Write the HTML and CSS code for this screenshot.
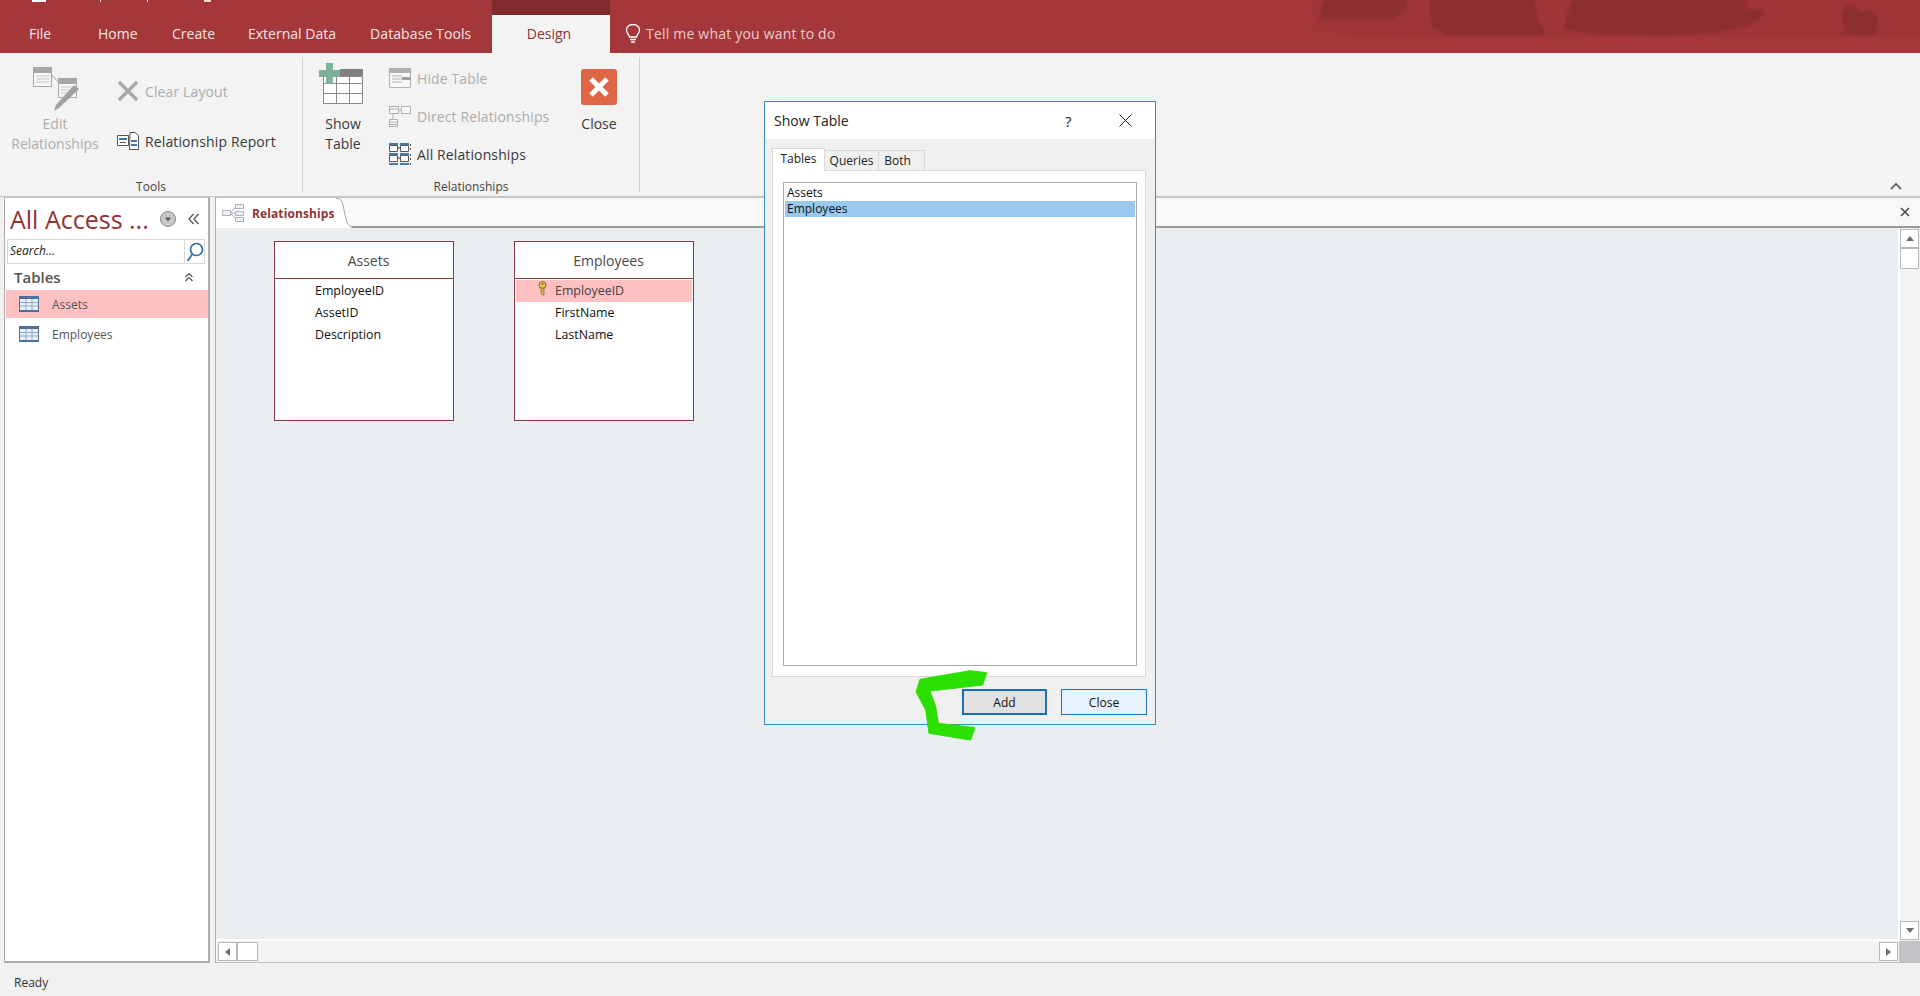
FILE: index.html
```html
<!DOCTYPE html>
<html lang="en">
<head>
  <meta charset="UTF-8" />
  <title>Relationships - Access</title>
  <link rel="stylesheet" href="styles.css">
</head>
<body>

  <header class="titlebar">
    <svg class="qat-bits" width="220" height="3" viewBox="0 0 220 3"><path d="M32 0h14v2H32z" fill="#fff"/><path d="M100 0h1v2h-1zM147 0h1v2h-1zM204 0h7v2h-7z" fill="#f0d8d8"/></svg>
    <div class="brush-zone"></div>
    <svg class="brush" width="620" height="37" viewBox="0 0 620 37">
      <path d="M19 20 23 0h84l-1 11-14 8-36 1z" fill="#8b2e30"/>
      <path d="M130 0h105l3 20 8 14-6 2H150l-18-8-2-10z" fill="#8b2e30"/>
      <path d="M263 28 272 0h178l-6 8 18 1 2 6-16 12-34 6-50 3-70-2-24-3z" fill="#8b2e30"/>
      <path d="M540 34l5-6-4-12 4-10 9-2 6 8 10-3 8 8-2 16-8 4z" fill="#8b2e30"/>
    </svg>
    <nav class="tabs">
      <span class="tab tab-file">File</span>
      <span class="tab tab-home">Home</span>
      <span class="tab tab-create">Create</span>
      <span class="tab tab-external">External Data</span>
      <span class="tab tab-dbtools">Database Tools</span>
      <span class="tab-design">Design</span>
      <span class="tell">
        <svg width="16" height="20" viewBox="0 0 16 20" fill="none" stroke="#fff" stroke-width="1.3"><path d="M4.500 13c0-2-3-3.500-3-7a6.500 5.500 0 0 1 13 0c0 3.500-3 5-3 7z"/><path d="M5 15.500h6M6 18h4"/></svg>
        Tell me what you want to do
      </span>
    </nav>
  </header>

  <section class="ribbon">
    <div class="group group-tools">
      <div class="group-body">
        <div class="big big-edit">
          <div class="big-icon">
            <svg width="46" height="44" viewBox="0 0 46 44" fill="none" stroke="#a6a6a6">
              <path d="M.5.500h18v19H.5z" fill="#f7f7f7"/><path d="M.5.500h18v5H.5z" fill="#a6a6a6"/><path d="M3 9h13M3 12h13M3 15h13" stroke="#c4c4c4"/>
              <path d="M18 7l7 8"/>
              <path d="M25.500 11.500h18v19h-18z" fill="#f7f7f7"/><path d="M25.500 11.500h18v5h-18z" fill="#a6a6a6"/><path d="M28 20h10M28 23h8M28 26h6" stroke="#c4c4c4"/>
              <path d="M41 18l5 4-20 19-5 3 2-6z" fill="#a0a0a0" stroke="none"/>
            </svg>
          </div>
          <span class="muted">Edit<br>Relationships</span>
        </div>
        <div class="smalls smalls-tools">
          <div class="small muted">
            <svg width="22" height="22" viewBox="0 0 22 22"><path d="M2 2l18 18M20 2 2 20" stroke="#a8a8a8" stroke-width="3.200"/></svg>
            Clear Layout
          </div>
          <div class="small">
            <svg width="22" height="18" viewBox="0 0 22 18" fill="#fff" stroke="#555"><path d="M.5 3.500h11v10H.5z"/><path d="M2 6h8v2H2z" fill="#3f78a8" stroke="none"/><path d="M13 .5h5l3.500 3v14h-9z"/><path d="M14 8h6v2h-6zM14 12h6v2h-6z" fill="#3f78a8" stroke="none"/><path d="M3 10.500h6"/></svg>
            Relationship Report
          </div>
        </div>
      </div>
      <div class="group-label">Tools</div>
    </div>
    <div class="group-sep"></div>

    <div class="group group-rel">
      <div class="group-body">
        <div class="big big-show">
          <div class="big-icon">
            <svg width="44" height="41" viewBox="0 0 44 41">
              <path d="M4.500 13.500h39v27h-39z" fill="#fff" stroke="#8a8a8a"/>
              <path d="M4 20.500h40M4 30.500h40M17.500 13v28M30.500 13v28" stroke="#8a8a8a"/>
              <path d="M21 6h23v7H21z" fill="#808080"/>
              <path d="M7 0h7v7h7v7h-7v7H7v-7H0V7h7z" fill="#7fb09c"/>
            </svg>
          </div>
          <span>Show<br>Table</span>
        </div>
        <div class="smalls smalls-rel">
          <div class="small muted">
            <svg width="22" height="20" viewBox="0 0 22 20" fill="none" stroke="#b0b0b0"><path d="M.5.500h21v19H.5z" fill="#f8f8f8"/><path d="M.5.500h21v4H.5z" fill="#b0b0b0"/><path d="M3 8h10M3 11h10M3 14h10"/><path d="M13 9h9v3h-9z" fill="#a0a0a0" stroke="none"/></svg>
            Hide Table
          </div>
          <div class="small muted">
            <svg width="22" height="22" viewBox="0 0 22 22" fill="#f8f8f8" stroke="#b0b0b0"><path d="M.5 1.500h9v7h-9zM12.500 1.500h9v7h-9zM.5 14.500h8v7h-8z"/><path d="M9 5h4M4 9v6M1 4h8M1 17h7M1 19.500h7"/></svg>
            Direct Relationships
          </div>
          <div class="small">
            <svg width="22" height="22" viewBox="0 0 22 22" fill="none">
              <path d="M0 0h9v2H0zM11 0h9v2h-9zM0 10h9v2H0zM11 10h9v2h-9zM0 20h9v2H0zM11 20h9v2h-9z" fill="#4b7aa6"/>
              <path d="M.5 2.500h8v6h-8zM11.500 2.500h8v6h-8zM.5 12.500h8v6h-8zM11.500 12.500h8v6h-8z" fill="#fff" stroke="#555"/>
              <path d="M9 5h2M9 15h2" stroke="#333"/>
              <path d="M21.500 1v2M21.500 5v2M21.500 11v2M21.500 15v2M21.500 20v2" stroke="#555"/>
            </svg>
            All Relationships
          </div>
        </div>
        <div class="big big-close">
          <div class="big-icon">
            <svg width="36" height="36" viewBox="0 0 36 36"><rect width="36" height="36" rx="3" fill="#dd6645"/><path d="M10 10l16 16M26 10 10 26" stroke="#fff" stroke-width="5"/></svg>
          </div>
          <span>Close</span>
        </div>
      </div>
      <div class="group-label">Relationships</div>
    </div>
    <div class="group-sep"></div>

    <svg class="collapse" width="12" height="8" viewBox="0 0 12 8" fill="none"><path d="M1 7l5-5 5 5" stroke="#707070" stroke-width="2"/></svg>
  </section>

  <div class="workspace">
    <aside class="nav">
      <div class="nav-head">
        <span class="nav-title">All Access ...</span>
        <span class="nav-drop"><svg width="16" height="16" viewBox="0 0 16 16"><circle cx="8" cy="8" r="7.500" fill="#c9c9c9" stroke="#8a8a8a"/><path d="M5 6.500h6L8 10.500z" fill="#555"/></svg></span>
        <svg width="11" height="12" viewBox="0 0 11 12" fill="none" stroke="#555" stroke-width="1.300"><path d="M5.500 1 1 6l4.500 5M10.500 1 6 6l4.500 5"/></svg>
      </div>
      <div class="nav-search">
        <span class="nav-search-text">Search...</span>
        <span class="nav-search-btn"><svg width="18" height="20" viewBox="0 0 18 20" fill="none" stroke="#2f6d9e" stroke-width="1.700"><circle cx="10.500" cy="7.500" r="6"/><path d="M6.500 12 1.500 19"/></svg></span>
      </div>
      <div class="nav-section">
        <span>Tables</span>
        <svg width="10" height="10" viewBox="0 0 10 10" fill="none" stroke="#555" stroke-width="1.200"><path d="M1.500 5 5 1.500 8.500 5M1.500 9 5 5.500 8.500 9"/></svg>
      </div>
      <div class="nav-item nav-item-on">
        <svg width="20" height="16" viewBox="0 0 20 16"><rect width="20" height="16" fill="#4f6f99"/><rect x="1" y="3" width="18" height="11" fill="#e8eff8"/><path d="M7 3v11M13 3v11M1 6.500h18M1 10h18" stroke="#8fa9c9"/></svg>
        Assets
      </div>
      <div class="nav-item">
        <svg width="20" height="16" viewBox="0 0 20 16"><rect width="20" height="16" fill="#4f6f99"/><rect x="1" y="3" width="18" height="11" fill="#e8eff8"/><path d="M7 3v11M13 3v11M1 6.500h18M1 10h18" stroke="#8fa9c9"/></svg>
        Employees
      </div>
    </aside>

    <main class="doc">
      <div class="doc-tabs">
        <div class="doc-tab">
          <svg width="22" height="18" viewBox="0 0 22 18" fill="#eef1f5" stroke="#a9b4c2"><path d="M.5 6.500h8v5h-8zM13.500.500h8v4h-8zM13.500 7.500h8v4h-8zM13.500 13.500h8v4h-8z"/><path d="M8 9l6-6M8 9h6M8 9l6 6"/></svg>
          Relationships
        </div>
        <svg class="doc-tab-edge" width="16" height="30" viewBox="0 0 21 30" preserveAspectRatio="none"><path d="M0 .5c5 0 7 1 9 6 3 10 4 22 12 22.500V30H0z" fill="#fff"/><path d="M0 .5c5 0 7 1 9 6 3 10 4 22 12 22.500" fill="none" stroke="#9a9a9a"/></svg>
        <span class="doc-close"><svg width="10" height="10" viewBox="0 0 10 10"><path d="M1 1l8 8M9 1 1 9" stroke="#444" stroke-width="1.500"/></svg></span>
      </div>

      <div class="doc-mid">
        <div class="canvas">
          <div class="tbl">
            <div class="tbl-name">Assets</div>
            <ul class="tbl-fields">
              <li>EmployeeID</li>
              <li>AssetID</li>
              <li>Description</li>
            </ul>
          </div>
          <div class="tbl">
            <div class="tbl-name">Employees</div>
            <ul class="tbl-fields">
              <li class="tbl-key">
                <svg class="key" width="9" height="15" viewBox="0 0 9 15"><circle cx="4.500" cy="4" r="3.500" fill="#e8c95a" stroke="#7a6420"/><circle cx="4.500" cy="3" r="1" fill="#7a6420"/><path d="M3 7h3v7H4.500L3 12.500z" fill="#d9b53f" stroke="#7a6420" stroke-width=".7"/></svg>
                EmployeeID
              </li>
              <li>FirstName</li>
              <li>LastName</li>
            </ul>
          </div>
        </div>
        <div class="vbar">
          <span class="sb-btn"><i class="arr arr-up"></i></span>
          <span class="sb-thumb-v"></span>
          <span class="sb-fill"></span>
          <span class="sb-btn"><i class="arr arr-down"></i></span>
        </div>
      </div>

      <div class="hbar">
        <span class="sb-btn"><i class="arr arr-left"></i></span>
        <span class="sb-thumb-h"></span>
        <span class="sb-fill"></span>
        <span class="sb-btn"><i class="arr arr-right"></i></span>
        <span class="sb-corner"></span>
      </div>
    </main>
  </div>

  <footer class="status">Ready</footer>

  <div class="dialog">
    <div class="dlg-title">
      <span class="dlg-name">Show Table</span>
      <span class="dlg-help">?</span>
      <svg class="dlg-x" width="13" height="13" viewBox="0 0 13 13"><path d="M.5.500l12 12M12.500.500l-12 12" stroke="#222"/></svg>
    </div>
    <div class="dlg-body">
      <div class="dlg-tabs">
        <span class="dlg-tab dlg-tab-on">Tables</span>
        <span class="dlg-tab dlg-tab-q">Queries</span>
        <span class="dlg-tab dlg-tab-b">Both</span>
      </div>
      <div class="dlg-panel">
        <div class="dlg-list">
          <div class="dlg-row">Assets</div>
          <div class="dlg-row dlg-row-on">Employees</div>
        </div>
      </div>
      <div class="dlg-btns">
        <button type="button" class="btn btn-add">Add</button>
        <button type="button" class="btn btn-close">Close</button>
      </div>
    </div>
  </div>

  <svg class="scribble" width="80" height="80" viewBox="0 0 80 80"><path d="M76.700 7.700 60 5.700 10 14.300 6 26.700 15.700 45 19 68.300 60.700 75 65 62.700 28.300 58.300 25.700 41.700 20 26 72.700 20z" fill="#2be000" stroke="#2be000" stroke-linejoin="round"/></svg>

</body>
</html>
```

FILE: styles.css
```css
* {
  margin: 0;
  padding: 0;
  box-sizing: border-box;
}

body {
  position: relative;
  display: flex;
  flex-direction: column;
  height: 996px;
  overflow: hidden;
  font-family: 'Open Sans', 'Noto Sans', sans-serif;
  font-size: 13px;
  color: #3a3a3a;
  background: #f1f1f1;
}

/* title bar + tabs */
.titlebar {
  position: relative;
  height: 53px;
  flex-shrink: 0;
  background: #a4373a;
}

.qat-bits {
  position: absolute;
  left: 0;
  top: 0;
}

.brush-zone {
  position: absolute;
  top: 0;
  right: 0;
  width: 680px;
  height: 37px;
  background: linear-gradient(to right, rgba(139, 46, 48, 0), rgba(139, 46, 48, .22) 25%, rgba(139, 46, 48, .22));
}

.brush {
  position: absolute;
  top: 0;
  right: 0;
  opacity: .85;
  filter: blur(1px);
}

.tabs {
  position: relative;
  display: flex;
  height: 53px;
  color: #fff;
  font-size: 14px;
}

.tab {
  padding-top: 24px;
  line-height: 20px;
  color: #f4e4e4;
}

.tab-file { margin-left: 29px; width: 69px; }
.tab-home { width: 74px; }
.tab-create { width: 76px; }
.tab-external { width: 122px; }
.tab-dbtools { width: 122px; letter-spacing: .1px; }

.tab-design {
  width: 118px;
  border-top: 15px solid #7f2a2c;
  padding: 9px 4px 0 0;
  line-height: 20px;
  text-align: center;
  color: #8f3335;
  background: #f3f3f3;
}

.tell {
  display: flex;
  align-items: flex-start;
  gap: 5px;
  margin-left: 15px;
  padding-top: 24px;
  line-height: 20px;
  letter-spacing: .2px;
  color: #e9caca;
}

/* ribbon */
.ribbon {
  display: flex;
  height: 144px;
  flex-shrink: 0;
  background: #f3f3f3;
  border-bottom: 1px solid #c6c6c6;
}

.group {
  display: flex;
  flex-direction: column;
  height: 139px;
  margin-top: 4px;
}

.group-tools { width: 302px; }
.group-rel { width: 336px; }

.group-body {
  display: flex;
  height: 122px;
}

.group-label {
  height: 16px;
  line-height: 16px;
  font-size: 12px;
  text-align: center;
  color: #444;
}

.group-sep {
  width: 1px;
  height: 135px;
  margin-top: 4px;
  background: #cfcfcf;
}

.big {
  text-align: center;
  line-height: 20px;
  font-size: 14px;
}

.big-edit { width: 110px; }
.big-show { width: 80px; }
.big-close { width: 80px; }

.big-icon {
  height: 57px;
  display: flex;
  justify-content: center;
  align-items: flex-start;
}

.big-edit .big-icon { padding: 10px 0 0 2px; }
.big-show .big-icon { padding: 6px 4px 0 0; }
.big-close .big-icon { padding-top: 12px; }

.smalls {
  display: flex;
  flex-direction: column;
}

.smalls-tools {
  width: 192px;
  padding: 24px 0 0 7px;
  gap: 30px;
}

.smalls-rel {
  width: 176px;
  padding: 11px 0 0 6px;
  gap: 18px;
}

.small {
  display: flex;
  align-items: center;
  gap: 6px;
  height: 20px;
  font-size: 14px;
  letter-spacing: .12px;
  white-space: nowrap;
}

.muted { color: #adadad; }

.collapse {
  margin: auto 18px 6px auto;
}

/* nav pane */
.workspace {
  display: flex;
  flex: 1;
  min-height: 0;
}

.nav {
  width: 206px;
  margin-left: 4px;
  background: #fff;
  border-left: 1px solid #ababab;
  border-right: 2px solid #ababab;
  border-bottom: 2px solid #ababab;
  border-top: 1px solid #c6c6c6;
}

.nav-head {
  display: flex;
  align-items: center;
  height: 41px;
  padding-left: 5px;
}

.nav-title {
  width: 150px;
  font-size: 25px;
  color: #8f3335;
  white-space: nowrap;
}

.nav-drop {
  display: flex;
  width: 28px;
}

.nav-search {
  display: flex;
  height: 25px;
  margin-left: 2px;
  width: 198px;
  border: 1px solid #d8d8d8;
}

.nav-search-text {
  flex: 1;
  padding-left: 2px;
  font-size: 12px;
  font-style: italic;
  line-height: 22px;
  color: #222;
}

.nav-search-btn {
  display: flex;
  align-items: center;
  justify-content: center;
  width: 20px;
  border-left: 1px solid #d8d8d8;
}

.nav-section {
  display: flex;
  align-items: center;
  justify-content: space-between;
  height: 26px;
  padding: 0 14px 0 9px;
  font-size: 15px;
  font-weight: 600;
  color: #555;
}

.nav-item {
  display: flex;
  align-items: center;
  gap: 13px;
  height: 28px;
  margin: 0 0 2px 1px;
  padding-left: 13px;
  font-size: 12px;
  color: #555;
}

.nav-item-on {
  background: #ffc0c2;
}

/* document area */
.doc {
  display: flex;
  flex-direction: column;
  flex: 1;
  min-width: 0;
  margin-left: 5px;
  border-left: 1px solid #ababab;
}

.doc-tabs {
  display: flex;
  align-items: flex-start;
  height: 31px;
  flex-shrink: 0;
  background: #f8f8f8;
  border-top: 1px solid #c6c6c6;
  border-bottom: 2px solid #9a9a9a;
}

.doc-tab {
  display: flex;
  align-items: center;
  gap: 8px;
  width: 120px;
  height: 30px;
  padding-left: 6px;
  font-size: 12px;
  font-weight: 700;
  letter-spacing: .1px;
  color: #8f3335;
  background: #fff;
  border-top-left-radius: 5px;
  white-space: nowrap;
}

.doc-tab svg {
  flex-shrink: 0;
}

.doc-close {
  display: flex;
  margin: 9px 10px 0 auto;
}

.doc-mid {
  display: flex;
  flex: 1;
  min-height: 0;
}

.canvas {
  display: flex;
  align-items: flex-start;
  gap: 60px;
  flex: 1;
  padding: 13px 0 0 58px;
  background: #ebeef1;
  border-right: 2px solid #fff;
  border-bottom: 2px solid #fff;
}

.tbl {
  width: 180px;
  height: 180px;
  background: #fff;
  border: 1px solid #8a3a40;
}

.tbl-name {
  height: 37px;
  padding-left: 9px;
  line-height: 38px;
  font-size: 14px;
  text-align: center;
  color: #4a4a4a;
  border-bottom: 1px solid #8a3a40;
}

.tbl-fields {
  list-style: none;
  padding: 1px;
}

.tbl-fields li {
  position: relative;
  height: 22px;
  padding-left: 39px;
  line-height: 22px;
  font-size: 12.400px;
  color: #111;
}

.tbl-fields .tbl-key {
  background: #ffc0c2;
  color: #444;
}

.key {
  position: absolute;
  left: 22px;
  top: 1px;
}

/* scrollbars */
.vbar {
  display: flex;
  flex-direction: column;
  width: 20px;
  flex-shrink: 0;
  padding: 1px 1px 1px 0;
  background: #f3f3f3;
}

.hbar {
  display: flex;
  align-items: center;
  height: 22px;
  flex-shrink: 0;
  padding-left: 2px;
  background: #f3f3f3;
  border-bottom: 1px solid #c0c0c0;
}

.sb-btn {
  display: flex;
  align-items: center;
  justify-content: center;
  width: 19px;
  height: 19px;
  flex-shrink: 0;
  background: #fff;
  border: 1px solid #b8b8b8;
}

.sb-thumb-v {
  width: 19px;
  height: 21px;
  flex-shrink: 0;
  background: #fff;
  border: 1px solid #b8b8b8;
}

.sb-thumb-h {
  width: 21px;
  height: 19px;
  flex-shrink: 0;
  background: #fff;
  border: 1px solid #b8b8b8;
}

.sb-fill { flex: 1; }

.sb-corner {
  width: 21px;
  height: 21px;
  margin-left: 1px;
  flex-shrink: 0;
  background: #c2c3c7;
}

.arr {
  display: block;
  width: 0;
  height: 0;
  border: 4px solid transparent;
}

.arr-up { border-bottom: 5px solid #6d6d6d; border-top: 0; }
.arr-down { border-top: 5px solid #6d6d6d; border-bottom: 0; }
.arr-left { border-right: 5px solid #6d6d6d; border-left: 0; }
.arr-right { border-left: 5px solid #6d6d6d; border-right: 0; }

.status {
  height: 33px;
  flex-shrink: 0;
  padding-left: 14px;
  line-height: 40px;
  font-size: 12px;
  color: #333;
  background: #f1f1f1;
}

/* Show Table dialog */
.dialog {
  position: absolute;
  left: 764px;
  top: 101px;
  display: flex;
  flex-direction: column;
  width: 392px;
  height: 624px;
  border: 1px solid #3a8ac4;
  background: #f0f0f0;
}

.dlg-title {
  display: flex;
  align-items: center;
  height: 37px;
  flex-shrink: 0;
  padding-left: 9px;
  background: #fff;
  font-size: 14px;
  color: #222;
}

.dlg-name { width: 291px; }
.dlg-help { width: 54px; font-size: 15px; }

.dlg-body {
  flex: 1;
  display: flex;
  flex-direction: column;
  padding: 8px 9px 0 7px;
}

.dlg-tabs {
  display: flex;
  align-items: flex-end;
  height: 23px;
  font-size: 12px;
}

.dlg-tab {
  height: 20px;
  line-height: 20px;
  border: 1px solid #d9d9d9;
  border-bottom: 0;
  border-left: 0;
  text-align: center;
  color: #222;
}

.dlg-tab-on {
  position: relative;
  width: 53px;
  height: 23px;
  line-height: 20px;
  margin-bottom: -1px;
  background: #fff;
  border-left: 1px solid #d9d9d9;
}

.dlg-tab-q { width: 54px; }
.dlg-tab-b { width: 46px; padding-right: 8px; }

.dlg-panel {
  height: 507px;
  padding: 11px 8px 10px 10px;
  background: #fff;
  border: 1px solid #d9d9d9;
}

.dlg-list {
  height: 100%;
  padding: 1px;
  border: 1px solid #ababab;
}

.dlg-row {
  height: 16px;
  padding-left: 2px;
  line-height: 16px;
  font-size: 12px;
  color: #111;
}

.dlg-row-on {
  background: #99c9ef;
}

.dlg-list .dlg-row:first-child {
  height: 17px;
  line-height: 18px;
}

.dlg-btns {
  display: flex;
  justify-content: flex-end;
  gap: 14px;
  margin-top: 12px;
  margin-right: -1px;
}

.btn {
  height: 26px;
  font-family: inherit;
  font-size: 12px;
  color: #111;
}

.btn-add {
  width: 85px;
  background: #e1e1e1;
  border: 2px solid #1a6fb5;
}

.btn-close {
  width: 86px;
  background: #e5f1fb;
  border: 1px solid #1a78c2;
}

.scribble {
  position: absolute;
  left: 910px;
  top: 665px;
}
```
